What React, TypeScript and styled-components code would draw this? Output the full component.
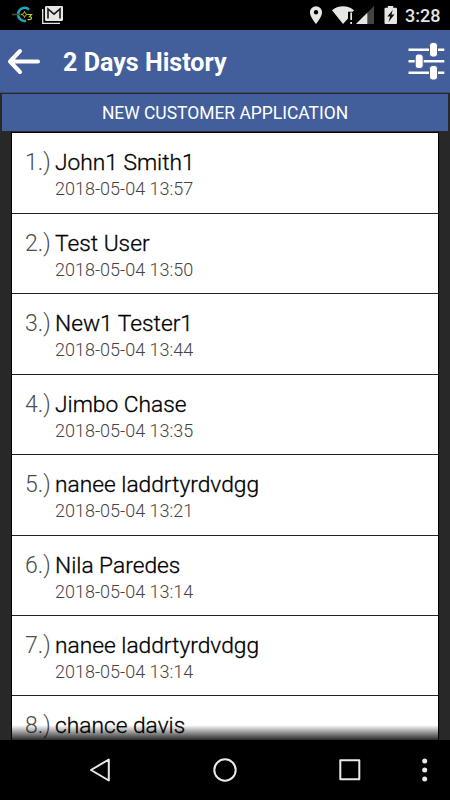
import React from "react";
import styled, { createGlobalStyle } from "styled-components";

const GlobalStyle = createGlobalStyle`
  * { box-sizing: border-box; }
  body { margin: 0; background: #000; font-family: Roboto, "Liberation Sans", sans-serif; }
`;

const Screen = styled.main`
  width: 450px;
  height: 800px;
  display: flex;
  flex-direction: column;
  overflow: hidden;
  background: #282828;
`;

const StatusBar = styled.div`
  height: 30px;
  flex: none;
  display: flex;
  justify-content: space-between;
  background: #000;
  color: #e6e6e6;
`;

const StatusIcons = styled.svg`
  display: block;
  height: 30px;
`;

const StatusRight = styled.div`
  display: flex;
`;

const Clock = styled.time`
  width: 45px;
  font-size: 18px;
  line-height: 32px;
  font-weight: 500;
  white-space: nowrap;
`;

const Header = styled.header`
  height: 63px;
  flex: none;
  display: flex;
  align-items: center;
  background: #435f9b;
  border-bottom: 1px solid #3b4c70;
  color: #fff;
`;

const IconButton = styled.button<{ $width: number }>`
  width: ${(p) => p.$width}px;
  height: 62px;
  padding: 0;
  border: 0;
  background: none;
  color: inherit;
  svg { display: block; }
`;

const Title = styled.h1`
  flex: 1;
  margin: 0;
  font-size: 25.1px;
  line-height: 62px;
  font-weight: 700;
  padding-top: 3px;
`;

const Content = styled.section`
  height: 647px;
  flex: none;
  padding-top: 1px;
  overflow: hidden;
`;

const Banner = styled.h2`
  height: 37.4px;
  margin: 0 2px;
  background: #435f9b;
  color: #fff;
  font-size: 17.45px;
  line-height: 38px;
  font-weight: 400;
  text-align: center;
`;

const List = styled.ol`
  position: relative;
  width: 428px;
  height: 608px;
  margin: 0.6px auto 0;
  padding: 0;
  border: 1px solid #000;
  border-bottom: 0;
  background: #fff;
  list-style: none;
  overflow: hidden;

  &::after {
    content: "";
    position: absolute;
    inset: auto 0 0;
    height: 15px;
    background: linear-gradient(rgba(0, 0, 0, 0), rgba(0, 0, 0, 0.84));
  }
`;

const Row = styled.li`
  height: 80.42px;
  display: grid;
  grid-template-columns: 43px 1fr;
  grid-template-rows: 27px 22px;
  padding-top: 16px;
  border-bottom: 1px solid #222;

  &:first-child {
    height: 80.9px;
  }
`;

const Index = styled.span`
  padding-left: 13px;
  font-size: 23px;
  line-height: 27px;
  font-weight: 300;
  color: #4c4c4c;
  white-space: nowrap;
`;

const Name = styled.span`
  font-size: 22.75px;
  line-height: 27px;
  font-weight: 300;
  color: #000;
  -webkit-text-stroke: 0.3px #000;
  white-space: nowrap;
`;

const DateText = styled.time`
  grid-column: 2;
  font-size: 18px;
  line-height: 26px;
  font-weight: 300;
  color: #444;
`;

const NavBar = styled.nav`
  height: 60px;
  flex: none;
  background: #000;
  svg { display: block; }
`;

const customers = [
  ["John1 Smith1", "2018-05-04 13:57"],
  ["Test User", "2018-05-04 13:50"],
  ["New1 Tester1", "2018-05-04 13:44"],
  ["Jimbo Chase", "2018-05-04 13:35"],
  ["nanee laddrtyrdvdgg", "2018-05-04 13:21"],
  ["Nila Paredes", "2018-05-04 13:14"],
  ["nanee laddrtyrdvdgg", "2018-05-04 13:14"],
  ["chance davis", ""],
];

function NotificationIcons() {
  return (
    <StatusIcons width="70" viewBox="0 0 70 30" fill="none">
      <path d="M29 9.600A6.500 6.500 0 1 0 26 20.700" stroke="#18aac0" strokeWidth="2.500" />
      <path d="M12 14.500H22" stroke="#45502a" strokeWidth="1.600" />
      <path d="M24.500 11.500l.9 2.100 2.100.9-2.100.9-.9 2.100-.9-2.100-2.100-.9 2.100-.9z" stroke="#d8e63c" strokeWidth=".8" />
      <path d="M27.700 14.500h3.800l-2 2.200c2.800-.2 2.800 3.200-.5 2.900h-1.400" stroke="#b8d33c" strokeWidth="1.200" />
      <path d="M42.700 9v14.300H60" stroke="#e6e6e6" strokeWidth="1.300" />
      <rect x="45" y="6" width="18" height="15" rx="1.200" fill="#e6e6e6" />
      <path d="M48 18.500V9l6 5.200L60 9v9.500" stroke="#191919" strokeWidth="1.600" />
    </StatusIcons>
  );
}

function SystemIcons() {
  return (
    <StatusIcons width="105" viewBox="300 0 105 30">
      <path d="M316 6.200a6.100 6.100 0 0 0-6.100 6.100c0 4.500 6.100 11.700 6.100 11.700s6.100-7.200 6.100-11.700a6.100 6.100 0 0 0-6.100-6.100zm0 8.200a2.200 2.200 0 1 1 0-4.400 2.200 2.200 0 0 1 0 4.400z" fill="#e6e6e6" />
      <path d="M332 10.200c6-5.400 16-5.400 22 0l-1.200 1.500H348v6.800L343 24z" fill="#e6e6e6" />
      <path d="M350.300 12.500h1.700v7.500h-1.700zM350.300 22h1.700v2h-1.700z" fill="#e6e6e6" />
      <path d="M374 6v18h-18z" fill="#444" />
      <path d="M367.300 12.700V24H356z" fill="#e6e6e6" />
      <path d="M385.500 7.700h2.300V6h5.400v1.700h2.800q1 0 1 1V23q0 1-1 1h-10.500q-1 0-1-1V8.700q0-1 1-1z" fill="#e6e6e6" />
      <path d="M392.800 10l-5.500 6.500h2.800l-1.600 5.500 6-7.500h-3z" fill="#111" />
    </StatusIcons>
  );
}

export default function App() {
  return (
    <>
      <GlobalStyle />
      <Screen>
        <StatusBar>
          <NotificationIcons />
          <StatusRight>
            <SystemIcons />
            <Clock>3:28</Clock>
          </StatusRight>
        </StatusBar>
        <Header>
          <IconButton $width={63} aria-label="Back">
            <svg width="63" height="62" fill="none" stroke="currentColor" strokeWidth="4" strokeLinecap="round" strokeLinejoin="round">
              <path d="M20 21L10 31.500 20 42M10 31.500h28" />
            </svg>
          </IconButton>
          <Title>2 Days History</Title>
          <IconButton $width={50} aria-label="Filters">
            <svg width="50" height="62" fill="currentColor">
              <path d="M8.500 18.500h35.800v2.400H8.500zM8.500 30h35.800v2.400H8.500zM8.500 41.500h35.800v2.400H8.500z" />
              <g stroke="#435f9b">
                <rect x="29.500" y="12.500" width="8" height="14.500" rx="3" />
                <rect x="15.200" y="24" width="8" height="14.500" rx="3" />
                <rect x="29.500" y="35.500" width="8" height="14.500" rx="3" />
              </g>
            </svg>
          </IconButton>
        </Header>
        <Content>
          <Banner>NEW CUSTOMER APPLICATION</Banner>
          <List>
            {customers.map(([name, date], i) => (
              <Row key={i}>
                <Index>{i + 1}.)</Index>
                <Name>{name}</Name>
                {date && <DateText>{date}</DateText>}
              </Row>
            ))}
          </List>
        </Content>
        <NavBar>
          <svg width="450" height="60" fill="none" stroke="#e9e9e9" strokeWidth="2" strokeLinejoin="round">
            <path d="M108.800 19.500v21L91 30z" />
            <circle cx="225" cy="30" r="10.700" />
            <rect x="340.300" y="20.300" width="19" height="19" />
            <g fill="#e9e9e9" stroke="none">
              <circle cx="424.700" cy="21" r="2.500" />
              <circle cx="424.700" cy="30" r="2.500" />
              <circle cx="424.700" cy="39" r="2.500" />
            </g>
          </svg>
        </NavBar>
      </Screen>
    </>
  );
}
